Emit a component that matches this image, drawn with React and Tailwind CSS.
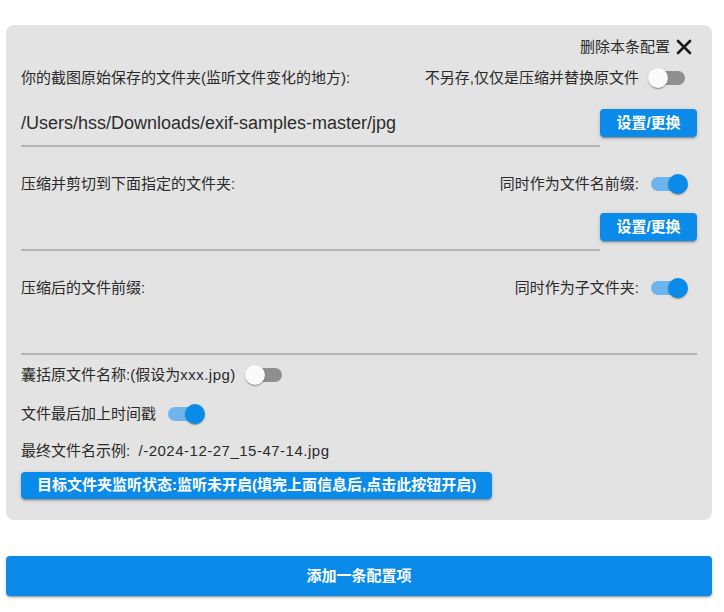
import React from "react";

const font = { fontFamily: '"Liberation Sans", "Noto Sans CJK SC", sans-serif' };

function Toggle({ on }) {
  return (
    <div className="relative h-[34px] w-[58px] shrink-0">
      <div
        className={
          "absolute left-[12px] top-[10px] h-[14px] w-[34px] rounded-full " +
          (on ? "bg-[#6db5ec]" : "bg-[#8f8f8f]")
        }
      />
      <div
        className={
          "absolute top-[7px] h-[20px] w-[20px] rounded-full shadow-[0_2px_1px_-1px_rgba(0,0,0,0.2),0_1px_1px_0_rgba(0,0,0,0.14),0_1px_3px_0_rgba(0,0,0,0.12)] " +
          (on ? "left-[29px] bg-[#0a8be9]" : "left-[9px] bg-[#fafafa]")
        }
      />
    </div>
  );
}

function BlueButton({ children, className = "" }) {
  return (
    <button
      className={
        "rounded-[4px] bg-[#0a8be9] text-[15px] font-bold text-white shadow-[0_3px_1px_-2px_rgba(0,0,0,0.2),0_2px_2px_0_rgba(0,0,0,0.14),0_1px_5px_0_rgba(0,0,0,0.12)] " +
        className
      }
    >
      {children}
    </button>
  );
}

function LabelRow({ label, right, on }) {
  return (
    <div className="flex h-[34px] items-center justify-between">
      <span>{label}</span>
      {right && (
        <div className="flex items-center">
          <span>{right}</span>
          <Toggle on={on} />
        </div>
      )}
    </div>
  );
}

function PathField({ value }) {
  return (
    <div className="flex items-start">
      <div className="h-[38px] flex-1 border-b-2 border-[#b4b4b4] text-[18px] leading-[28px] text-[#2c2c2c]">
        {value}
      </div>
      <BlueButton className="h-[28px] w-[97px]">设置/更换</BlueButton>
    </div>
  );
}

export default function App() {
  return (
    <div className="min-h-screen bg-white pl-[6px] pr-[12px] pt-[25px] text-[15px] text-[#2a2a2a]" style={font}>
      <div className="rounded-[8px] bg-[#e3e3e3] px-[15px] pb-[21px] pt-[8px]">
        <div className="flex h-[28px] items-center justify-end pr-[5px]">
          <span>删除本条配置</span>
          <svg width="16" height="16" viewBox="0 0 16 16" className="ml-[6px]">
            <path d="M2 2 L14 14 M14 2 L2 14" stroke="#1a1a1a" strokeWidth="2.6" strokeLinecap="round" />
          </svg>
        </div>

        <LabelRow label="你的截图原始保存的文件夹(监听文件变化的地方):" right="不另存,仅仅是压缩并替换原文件" on={false} />
        <div className="mt-[14px]">
          <PathField value="/Users/hss/Downloads/exif-samples-master/jpg" />
        </div>

        <div className="mt-[20px]">
          <LabelRow label="压缩并剪切到下面指定的文件夹:" right="同时作为文件名前缀:" on />
        </div>
        <div className="mt-[12px]">
          <PathField value="" />
        </div>

        <div className="mt-[20px]">
          <LabelRow label="压缩后的文件前缀:" right="同时作为子文件夹:" on />
        </div>
        <div className="h-[50px] border-b-2 border-[#b4b4b4]" />

        <div className="mt-[3px] flex h-[34px] items-center">
          <span>
            囊括原文件名称:(假设为<span className="tracking-[0.5px]">xxx.jpg)</span>
          </span>
          <Toggle on={false} />
        </div>
        <div className="mt-[5px] flex h-[34px] items-center">
          <span>文件最后加上时间戳</span>
          <Toggle on />
        </div>
        <div className="mt-[8px] flex h-[24px] items-center">
          <span>
            最终文件名示例:&nbsp;&nbsp;<span className="tracking-[0.5px]">/-2024-12-27_15-47-14.jpg</span>
          </span>
        </div>
        <div className="mt-[9px]">
          <BlueButton className="h-[27px] px-[16px]">目标文件夹监听状态:监听未开启(填完上面信息后,点击此按钮开启)</BlueButton>
        </div>
      </div>

      <BlueButton className="mt-[36px] h-[40px] w-full">添加一条配置项</BlueButton>
    </div>
  );
}
